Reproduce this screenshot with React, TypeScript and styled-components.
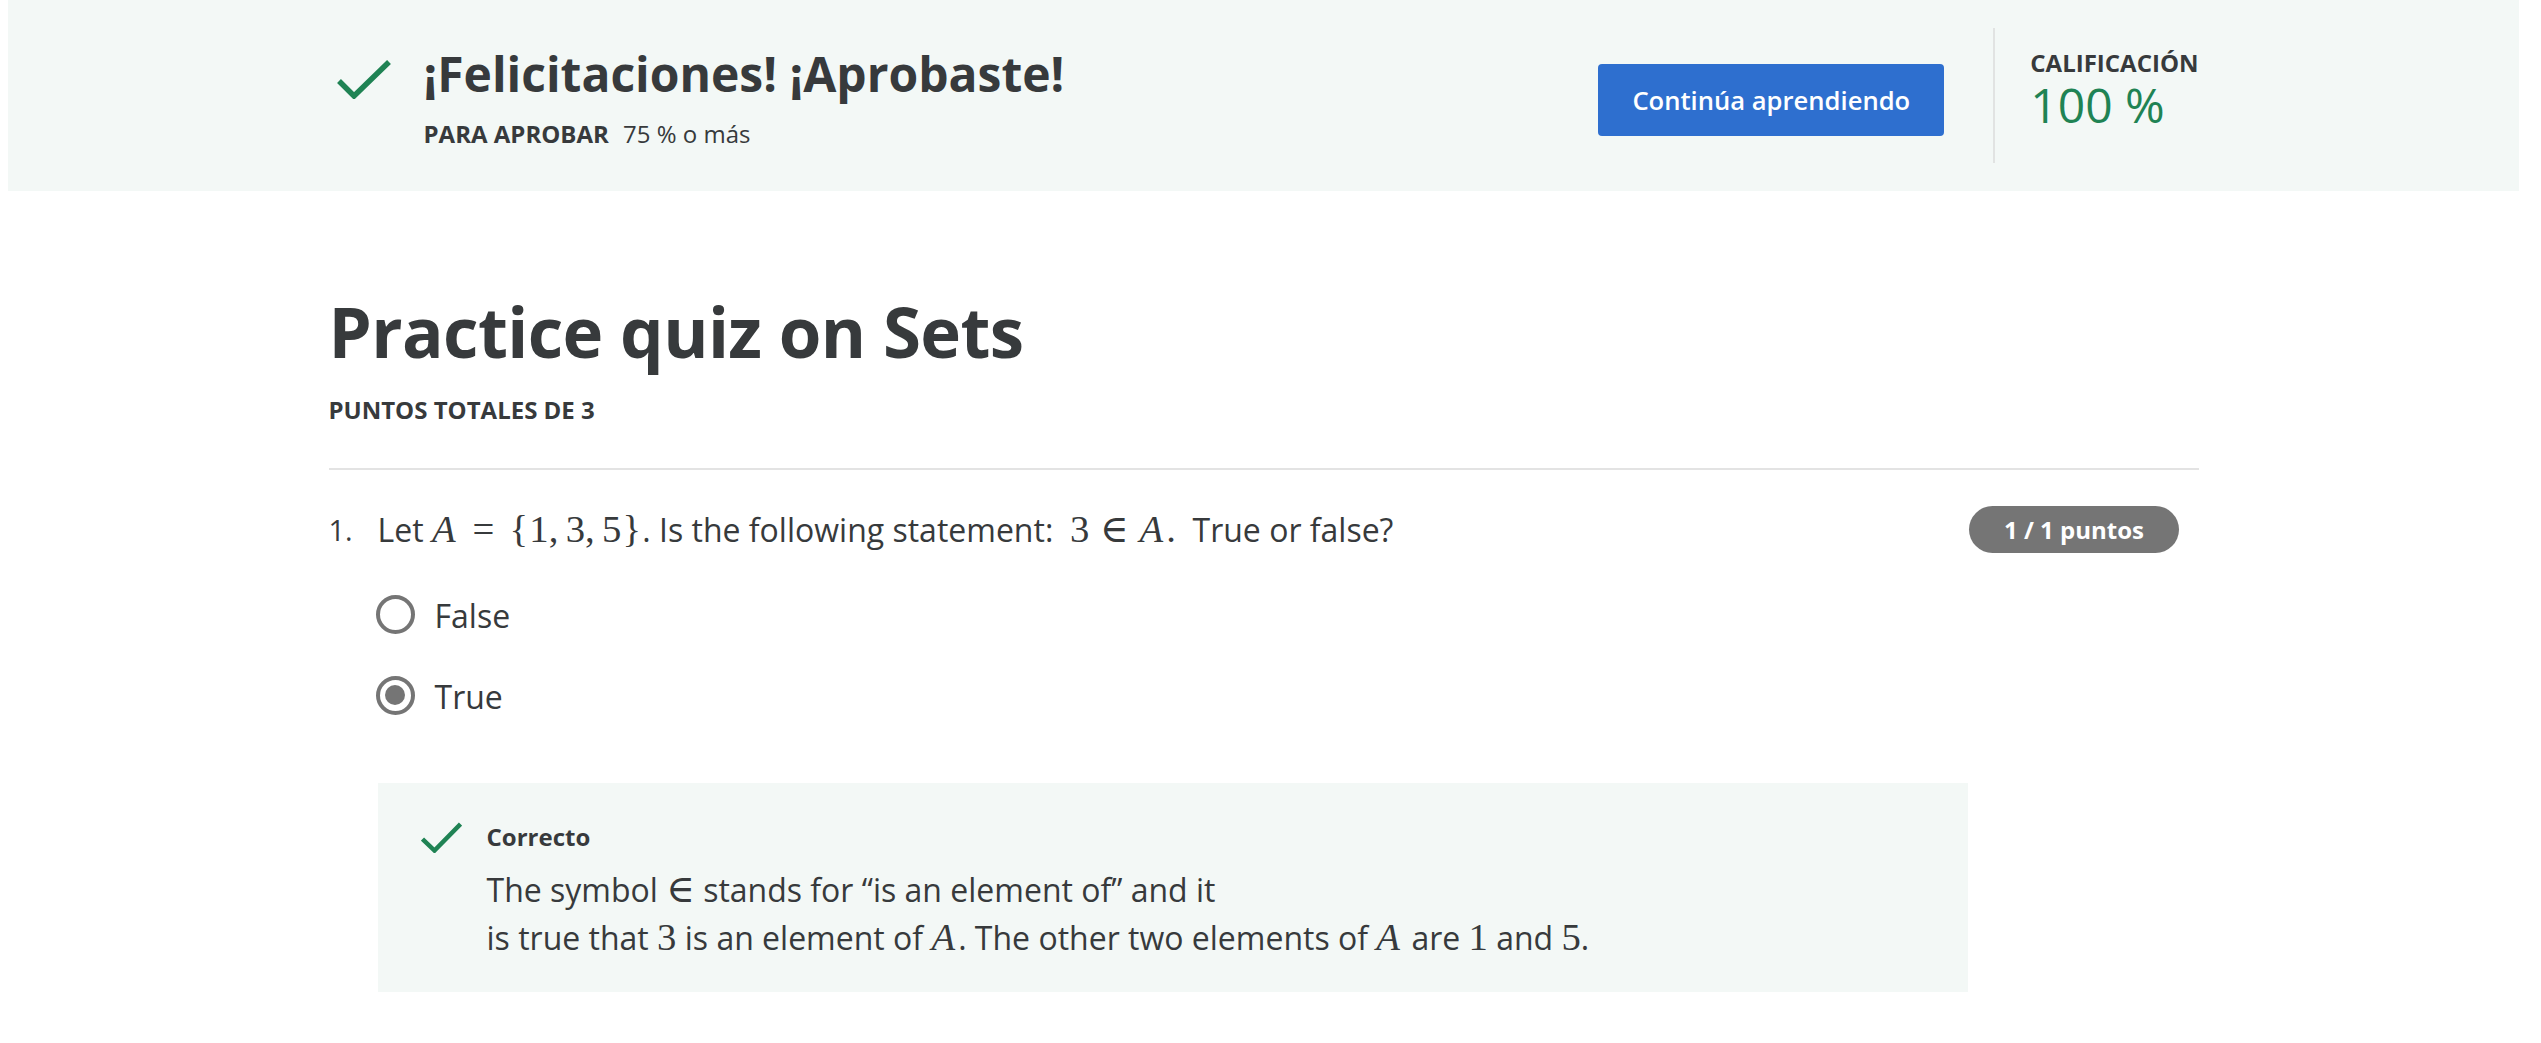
import React from "react";
import styled, { createGlobalStyle } from "styled-components";

const GlobalStyle = createGlobalStyle`
  html, body { margin: 0; padding: 0; background: #ffffff; }
  body {
    font-family: "Open Sans", "Liberation Sans", sans-serif;
    color: #373a3c;
  }
  * { box-sizing: border-box; }
`;

const Page = styled.div`
  width: 2527px;
`;

const Banner = styled.header`
  margin: 0 8px;
  height: 191px;
  background: #f3f8f6;
  display: flex;
  justify-content: center;
`;

const BannerInner = styled.div`
  width: 1870px;
  display: flex;
  align-items: center;
  justify-content: space-between;
`;

const PassGroup = styled.div`
  display: flex;
  align-items: flex-start;
  padding-left: 8px;
  margin-top: 5px;
`;

const BannerCheck = styled.svg`
  flex: none;
  width: 54px;
  height: 40px;
  margin-top: 14.6px;
  margin-right: 33px;
`;

const PassText = styled.div`
  display: flex;
  flex-direction: column;
`;

const PassTitle = styled.h2`
  margin: 0;
  font-size: 48px;
  line-height: 60px;
  font-weight: 700;
  color: #373a3c;
`;

const PassLine = styled.div`
  margin-top: 11.3px;
  font-size: 24px;
  line-height: 36px;
`;

const PassLabel = styled.strong`
  font-weight: 700;
  margin-right: 8px;
`;

const ResultGroup = styled.div`
  display: flex;
  align-items: center;
`;

const ContinueButton = styled.button`
  width: 346px;
  height: 72px;
  margin-top: 9px;
  margin-right: 49px;
  border: none;
  border-radius: 4px;
  background: #2e6fcf;
  color: #ffffff;
  font-family: "Open Sans", "Liberation Sans", sans-serif;
  font-size: 25.6px;
  font-weight: 600;
  cursor: pointer;
`;

const VDivider = styled.div`
  width: 2px;
  height: 135px;
  background: #e1e3e2;
`;

const Grade = styled.div`
  display: flex;
  flex-direction: column;
  margin-left: 35px;
  margin-bottom: 17px;
`;

const GradeLabel = styled.div`
  font-size: 24px;
  line-height: 36px;
  font-weight: 700;
`;

const GradeValue = styled.div`
  margin-top: 0.7px;
  font-size: 48px;
  line-height: 48px;
  font-weight: 400;
  color: #1f8354;
`;

const Main = styled.main`
  width: 1870px;
  margin: 0 auto;
  padding-top: 98.2px;
`;

const QuizTitle = styled.h1`
  margin: 0;
  font-size: 69px;
  line-height: 84px;
  font-weight: 700;
  letter-spacing: -0.6px;
  color: #373a3c;
`;

const TotalPoints = styled.div`
  margin-top: 18.5px;
  font-size: 24px;
  line-height: 36px;
  font-weight: 700;
`;

const Rule = styled.hr`
  margin: 40.3px 0 0;
  height: 2px;
  border: none;
  background: #e3e3e3;
`;

const QuestionGrid = styled.section`
  margin-top: 35.6px;
  display: grid;
  grid-template-columns: 49px 1fr auto;
  align-items: start;
`;

const QNumber = styled.div`
  font-size: 28.8px;
  line-height: 48px;
`;

const QBody = styled.div`
  display: flex;
  flex-direction: column;
`;

const QText = styled.div`
  font-size: 32px;
  line-height: 48px;
`;

const PointsBadge = styled.div`
  height: 47px;
  margin: 0 20px 0 1px;
  padding: 0 34.5px;
  border-radius: 24px;
  background: #757575;
  color: #ffffff;
  font-size: 24px;
  font-weight: 700;
  display: flex;
  align-items: center;
  white-space: nowrap;
`;

const Options = styled.div`
  margin-top: 38px;
  display: flex;
  flex-direction: column;
  gap: 33px;
`;

const OptionRow = styled.label`
  display: flex;
  align-items: center;
  height: 48px;
  margin-left: -2px;
  font-size: 32px;
  line-height: 48px;
`;

const Radio = styled.span<{ $checked?: boolean }>`
  flex: none;
  width: 39px;
  height: 39px;
  margin-right: 20px;
  margin-top: -3px;
  border: 4px solid #757575;
  border-radius: 50%;
  display: flex;
  align-items: center;
  justify-content: center;
  &::after {
    content: "";
    width: 20px;
    height: 20px;
    border-radius: 50%;
    background: ${(p) => (p.$checked ? "#757575" : "transparent")};
  }
`;

const Feedback = styled.div`
  margin-top: 62.4px;
  background: #f3f8f6;
  padding: 35.7px 0 30.4px 43px;
  display: flex;
  align-items: flex-start;
`;

const FeedbackCheck = styled.svg`
  flex: none;
  width: 41px;
  height: 31px;
  margin-top: 3.3px;
  margin-right: 25px;
`;

const FeedbackBody = styled.div`
  display: flex;
  flex-direction: column;
`;

const FeedbackTitle = styled.div`
  font-size: 24px;
  line-height: 36px;
  font-weight: 700;
`;

const FeedbackText = styled.div`
  margin-top: 10.9px;
  font-size: 32px;
  line-height: 48px;
`;

const M = styled.span`
  font-family: "Liberation Serif", "DejaVu Serif", serif;
  font-size: 1.21em;
  line-height: 1;
  white-space: nowrap;
`;

const MI = styled.i<{ $pad?: boolean }>`
  font-style: italic;
  margin-right: ${(p) => (p.$pad ? "0.08em" : "0")};
`;

const MRel = styled.span<{ $wide?: boolean }>`
  margin: 0 ${(p) => (p.$wide ? "0.36em" : "0.2778em")};
`;

const MComma = styled.span`
  margin-right: 0.19em;
`;

const MBrace = styled.span`
  margin: 0 0.03em;
`;

export default function App() {
  return (
    <Page>
      <GlobalStyle />
      <Banner>
        <BannerInner>
          <PassGroup>
            <BannerCheck viewBox="0 0 54 40">
              <polyline
                points="2,22 17,37 52,3"
                fill="none"
                stroke="#1f8354"
                strokeWidth="5.5"
                strokeLinejoin="miter"
              />
            </BannerCheck>
            <PassText>
              <PassTitle>¡Felicitaciones! ¡Aprobaste!</PassTitle>
              <PassLine>
                <PassLabel>PARA APROBAR</PassLabel> 75 % o más
              </PassLine>
            </PassText>
          </PassGroup>
          <ResultGroup>
            <ContinueButton>Continúa aprendiendo</ContinueButton>
            <VDivider />
            <Grade>
              <GradeLabel>CALIFICACIÓN</GradeLabel>
              <GradeValue>100 %</GradeValue>
            </Grade>
          </ResultGroup>
        </BannerInner>
      </Banner>

      <Main>
        <QuizTitle>Practice quiz on Sets</QuizTitle>
        <TotalPoints>PUNTOS TOTALES DE 3</TotalPoints>
        <Rule />

        <QuestionGrid>
          <QNumber>1.</QNumber>
          <QBody>
            <QText>
              Let{" "}
              <M>
                <MI $pad>A</MI>
                <MRel $wide>=</MRel>
                <MBrace>{"{"}</MBrace>1<MComma>,</MComma>3<MComma>,</MComma>5
                <MBrace>{"}"}</MBrace>
              </M>
              . Is the following statement:{"\u00a0\u00a0"}
              <M>
                3<MRel>∈</MRel>
                <MI $pad>A</MI>.
              </M>
              {"\u00a0\u00a0"}True or false?
            </QText>

            <Options>
              <OptionRow>
                <Radio />
                False
              </OptionRow>
              <OptionRow>
                <Radio $checked />
                True
              </OptionRow>
            </Options>

            <Feedback>
              <FeedbackCheck viewBox="0 0 41 31">
                <polyline
                  points="1.5,17 13.5,28.5 39.5,2"
                  fill="none"
                  stroke="#1f8354"
                  strokeWidth="4.5"
                  strokeLinejoin="miter"
                />
              </FeedbackCheck>
              <FeedbackBody>
                <FeedbackTitle>Correcto</FeedbackTitle>
                <FeedbackText>
                  The symbol <M>∈</M> stands for “is an element of” and it
                  <br />
                  is true that <M>3</M> is an element of{" "}
                  <M>
                    <MI $pad>A</MI>
                  </M>
                  . The other two elements of{" "}
                  <M>
                    <MI $pad>A</MI>
                  </M>{" "}
                  are <M>1</M> and <M>5</M>.
                </FeedbackText>
              </FeedbackBody>
            </Feedback>
          </QBody>
          <PointsBadge>1 / 1 puntos</PointsBadge>
        </QuestionGrid>
      </Main>
    </Page>
  );
}
